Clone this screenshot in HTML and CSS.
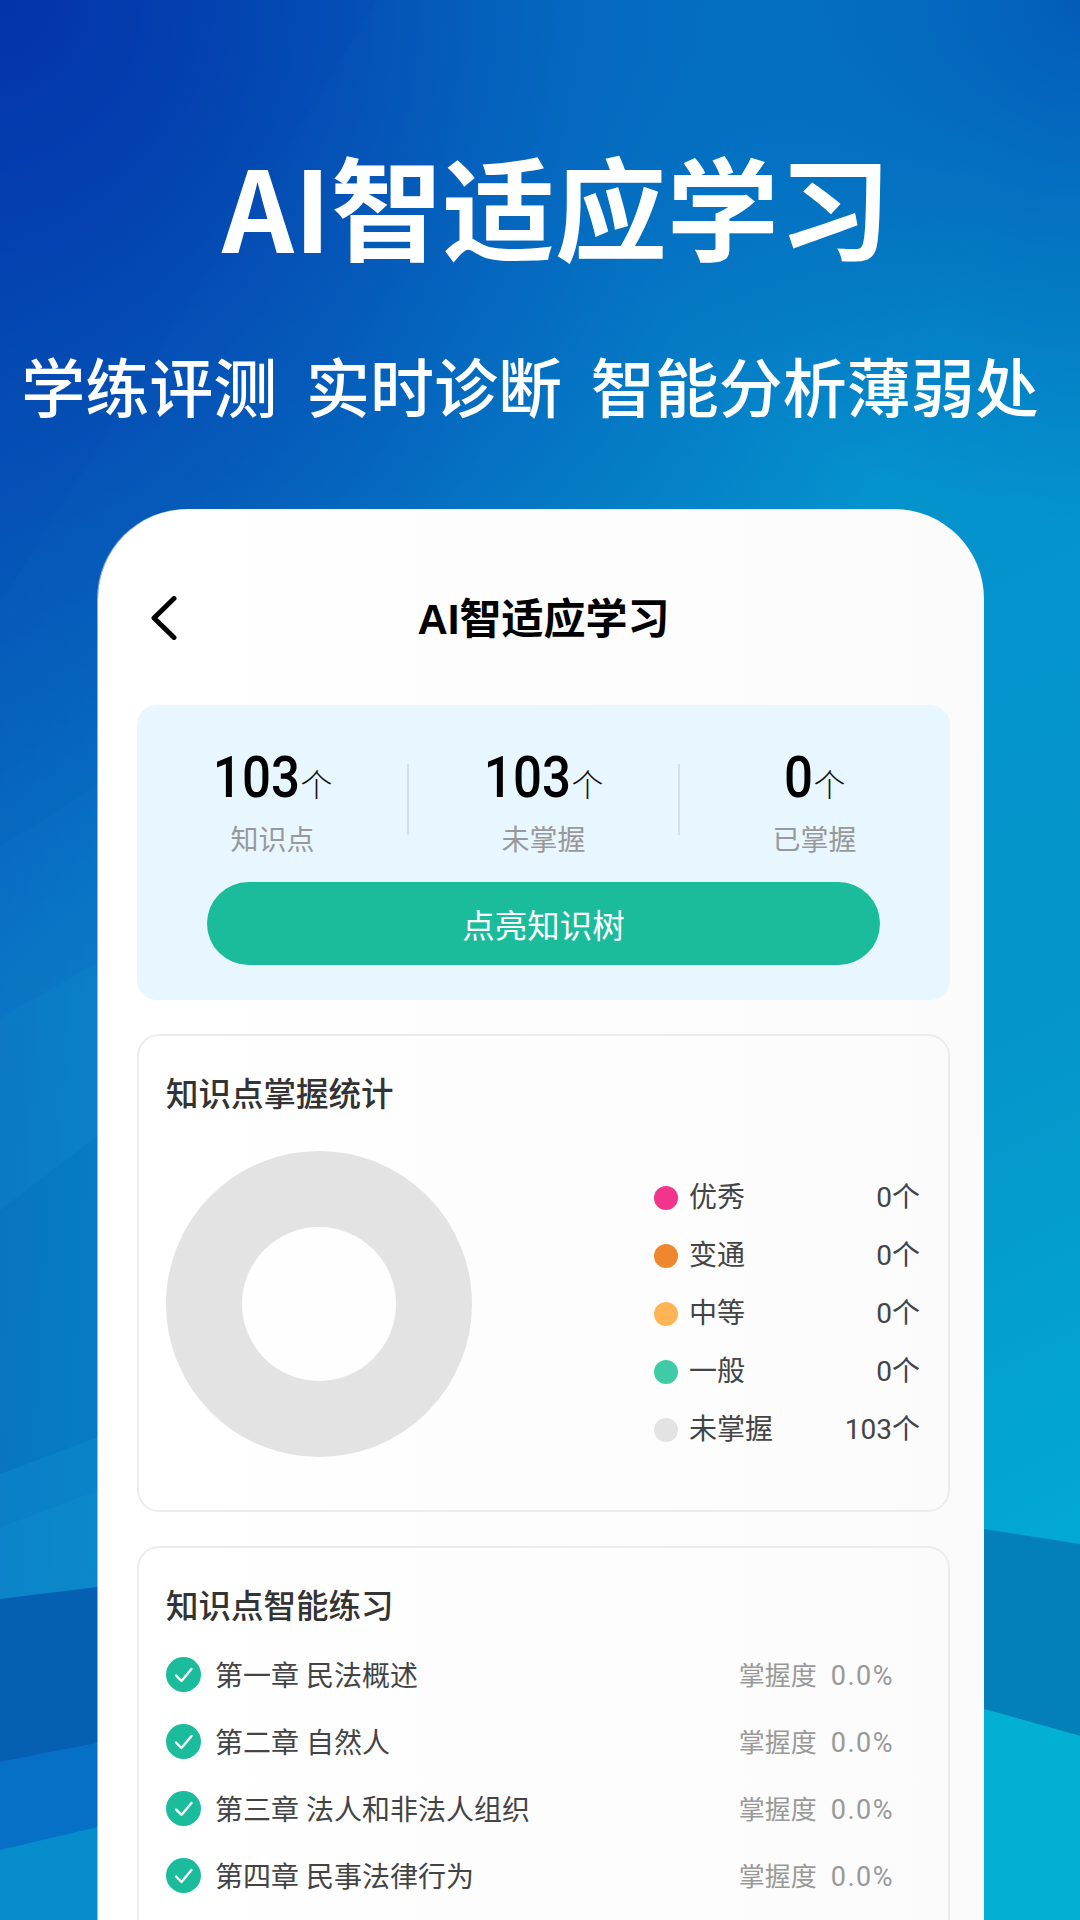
FILE: index.html
```html
<!DOCTYPE html>
<html lang="zh-CN">
<head>
<meta charset="utf-8">
<title>AI智适应学习</title>
<link rel="stylesheet" href="styles.css">
</head>
<body>
<div class="poster">
  <svg class="bg" viewBox="0 0 1080 1920" preserveAspectRatio="none" aria-hidden="true">
    <defs>
      <linearGradient id="base" gradientUnits="userSpaceOnUse" x1="300" y1="400" x2="1080" y2="1920">
        <stop offset="0" stop-color="#058fce"/>
        <stop offset=".55" stop-color="#0497cb"/>
        <stop offset="1" stop-color="#00b8d8"/>
      </linearGradient>
      <radialGradient id="tl" gradientUnits="userSpaceOnUse" cx="0" cy="0" r="1000">
        <stop offset="0" stop-color="#0433aa"/>
        <stop offset="1" stop-color="#0433aa" stop-opacity="0"/>
      </radialGradient>
      <radialGradient id="tr" gradientUnits="userSpaceOnUse" cx="1080" cy="0" r="520">
        <stop offset="0" stop-color="#035cb8"/>
        <stop offset="1" stop-color="#035cb8" stop-opacity="0"/>
      </radialGradient>
      <linearGradient id="left" gradientUnits="userSpaceOnUse" x1="0" y1="0" x2="480" y2="0">
        <stop offset="0" stop-color="#0a55b8" stop-opacity=".5"/>
        <stop offset="1" stop-color="#0a55b8" stop-opacity="0"/>
      </linearGradient>
    </defs>
    <rect width="1080" height="1920" fill="url(#base)"/>
    <rect width="1080" height="1920" fill="url(#left)"/>
    <rect width="1080" height="1920" fill="url(#tl)"/>
    <rect width="1080" height="1920" fill="url(#tr)"/>
    <polygon points="0,0 378,0 0,603" fill="#0433aa" opacity=".05"/>
    <polygon points="0,847 98,785 98,962 0,1018" fill="#2a8fe0" opacity=".08"/>
    <polygon points="0,1018 98,962 98,1136 0,1210" fill="#2a9fe8" opacity=".13"/>
    <polygon points="0,1474 98,1437 98,1490 0,1527" fill="#1aa0dc" opacity=".22"/>
    <polygon points="0,1527 98,1490 98,1587 0,1599" fill="#1aa8dc" opacity=".28"/>
    <polygon points="0,1599 98,1587 98,1743 0,1762" fill="#0560b4"/>
    <polygon points="0,1762 98,1743 98,1827 0,1850" fill="#0570c6"/>
    <polygon points="0,1850 98,1827 98,1920 0,1920" fill="#078dcb"/>
    <polygon points="984,1529 1080,1544 1080,1736 984,1709" fill="#0480b8"/>
    <polygon points="984,1709 1080,1736 1080,1920 984,1920" fill="#01b0d3"/>
  </svg>

  <h1 class="headline">AI智适应学习</h1>
  <p class="subline">学练评测&nbsp; 实时诊断&nbsp; 智能分析薄弱处</p>

  <main class="panel">
    <header class="nav">
      <svg class="back" viewBox="0 0 27 44" aria-hidden="true"><path d="M24 2.5 4 22l20 19.5" fill="none" stroke="#000" stroke-width="5" stroke-linecap="round" stroke-linejoin="round"/></svg>
      <span class="nav-title">AI智适应学习</span>
    </header>

    <section class="summary">
      <div class="stats">
        <div class="stat">
          <div class="stat-num"><span class="digits d3">103</span><span class="unit">个</span></div>
          <div class="stat-label">知识点</div>
        </div>
        <div class="stat">
          <div class="stat-num"><span class="digits d3">103</span><span class="unit">个</span></div>
          <div class="stat-label">未掌握</div>
        </div>
        <div class="stat">
          <div class="stat-num"><span class="digits d1">0</span><span class="unit">个</span></div>
          <div class="stat-label">已掌握</div>
        </div>
      </div>
      <div class="cta">点亮知识树</div>
    </section>

    <section class="card card-chart">
      <h2 class="card-title">知识点掌握统计</h2>
      <div class="chart-row">
        <div class="donut"></div>
        <ul class="legend">
          <li><i class="dot dot-a"></i><span class="legend-name">优秀</span><span>0个</span></li>
          <li><i class="dot dot-b"></i><span class="legend-name">变通</span><span>0个</span></li>
          <li><i class="dot dot-c"></i><span class="legend-name">中等</span><span>0个</span></li>
          <li><i class="dot dot-d"></i><span class="legend-name">一般</span><span>0个</span></li>
          <li><i class="dot dot-e"></i><span class="legend-name">未掌握</span><span>103个</span></li>
        </ul>
      </div>
    </section>

    <section class="card card-list">
      <h2 class="card-title">知识点智能练习</h2>
      <ul class="chapters">
        <li><svg class="check" viewBox="0 0 35 35" aria-hidden="true"><circle cx="17.5" cy="17.5" r="17.5" fill="#1abc9c"/><path d="M10 18.5l5.5 5.5L25.5 12" fill="none" stroke="#fff" stroke-width="2.4" stroke-linecap="round" stroke-linejoin="round"/></svg><span class="chapter-name">第一章 民法概述</span><span class="mastery">掌握度</span><span class="pct">0.0%</span></li>
        <li><svg class="check" viewBox="0 0 35 35" aria-hidden="true"><circle cx="17.5" cy="17.5" r="17.5" fill="#1abc9c"/><path d="M10 18.5l5.5 5.5L25.5 12" fill="none" stroke="#fff" stroke-width="2.4" stroke-linecap="round" stroke-linejoin="round"/></svg><span class="chapter-name">第二章 自然人</span><span class="mastery">掌握度</span><span class="pct">0.0%</span></li>
        <li><svg class="check" viewBox="0 0 35 35" aria-hidden="true"><circle cx="17.5" cy="17.5" r="17.5" fill="#1abc9c"/><path d="M10 18.5l5.5 5.5L25.5 12" fill="none" stroke="#fff" stroke-width="2.4" stroke-linecap="round" stroke-linejoin="round"/></svg><span class="chapter-name">第三章 法人和非法人组织</span><span class="mastery">掌握度</span><span class="pct">0.0%</span></li>
        <li><svg class="check" viewBox="0 0 35 35" aria-hidden="true"><circle cx="17.5" cy="17.5" r="17.5" fill="#1abc9c"/><path d="M10 18.5l5.5 5.5L25.5 12" fill="none" stroke="#fff" stroke-width="2.4" stroke-linecap="round" stroke-linejoin="round"/></svg><span class="chapter-name">第四章 民事法律行为</span><span class="mastery">掌握度</span><span class="pct">0.0%</span></li>
      </ul>
    </section>
  </main>
</div>
</body>
</html>
```
FILE: styles.css
```css
* { box-sizing: border-box; margin: 0; padding: 0; }
html, body { width: 1080px; height: 1920px; overflow: hidden; }
body { font-family: "Noto Sans CJK SC", "Noto Sans", sans-serif; color: #333; }
ul { list-style: none; }

.poster { position: relative; width: 1080px; height: 1920px; overflow: hidden; padding-top: 129px; display: flex; flex-direction: column; align-items: center; }
.bg { position: absolute; left: 0; top: 0; width: 1080px; height: 1920px; }

.headline { position: relative; margin-left: 33px; font-size: 112px; line-height: 150px; font-weight: 700; color: #fff; white-space: nowrap; font-family: "Noto Sans CJK SC", sans-serif; }
.subline { position: relative; margin-top: 63px; margin-right: 20px; font-size: 64px; line-height: 84px; font-weight: 500; color: #fff; white-space: nowrap; }

.panel { position: relative; margin-top: 83px; margin-left: 2px; width: 886px; flex: 1; background: linear-gradient(to right, #fff, #fbfbfb); box-shadow: -1px 0 0 rgba(255,255,255,.5); border-radius: 90px 90px 0 0; padding: 68px 34px 0 39px; display: flex; flex-direction: column; }

.nav { position: relative; display: flex; justify-content: center; align-items: center; height: 60px; margin-top: 8px; margin-bottom: 60px; }
.back { position: absolute; left: 13px; top: 11px; width: 27px; height: 44px; }
.nav-title { font-size: 42px; font-weight: 700; color: #000; font-family: "Liberation Sans", "Noto Sans CJK SC", sans-serif; }

.summary { background: #e8f7ff; border-radius: 20px; height: 295px; padding-top: 39px; display: flex; flex-direction: column; align-items: center; flex: none; }
.stats { display: grid; grid-template-columns: repeat(3, 1fr); width: 100%; }
.stat { display: flex; flex-direction: column; align-items: center; position: relative; }
.stat + .stat::before { content: ""; position: absolute; left: -1px; top: 20px; width: 2px; height: 71px; background: #d5e0e6; }
.stat-num { font-family: Roboto, "Liberation Sans", sans-serif; font-size: 58px; line-height: 66px; color: #000; white-space: nowrap; }
.digits { display: inline-block; font-weight: 500; transform: scaleX(.88); transform-origin: right center; }
.d3 { margin-left: -12px; }
.d1 { margin-left: -4px; }
.unit { font-family: "Noto Sans CJK SC", sans-serif; font-size: 32px; font-weight: 300; margin-left: 1px; color: #111; }
.stat-label { font-size: 28px; line-height: 40px; color: #999; margin-top: 2px; }
.cta { margin-top: 24px; width: 673px; height: 83px; border-radius: 42px; background: #1abc9c; color: #fff; font-size: 32.5px; display: flex; align-items: center; justify-content: center; }

.card { border: 2px solid #ececec; border-radius: 22px; flex: none; }
.card-title { font-size: 32.5px; line-height: 46px; font-weight: 500; color: #333; }
.card-chart { margin-top: 34px; height: 478px; padding: 33px 28px 0 27px; }
.chart-row { display: flex; align-items: center; justify-content: space-between; margin-top: 36px; }
.donut { width: 306px; height: 306px; border-radius: 50%; border: 76px solid #e3e3e3; flex: none; }
.legend { width: 266px; margin-top: 20px; display: flex; flex-direction: column; gap: 18px; font-size: 28px; line-height: 40px; color: #444; font-family: Roboto, "Noto Sans CJK SC", sans-serif; }
.legend li { display: flex; align-items: center; }
.legend-name { flex: 1; margin-left: 11px; }
.dot { width: 24px; height: 24px; border-radius: 50%; flex: none; }
.dot-a { background: #f2348c; }
.dot-b { background: #ee872d; }
.dot-c { background: #ffb554; }
.dot-d { background: #3fcba5; }
.dot-e { background: #e3e3e3; }

.card-list { margin-top: 34px; flex: 1; border-bottom: 0; border-radius: 22px 22px 0 0; padding: 33px 27px 0; }
.chapters { margin-top: 27px; display: flex; flex-direction: column; gap: 27px; }
.chapters li { display: flex; align-items: center; height: 40px; font-size: 28px; font-family: Roboto, "Noto Sans CJK SC", sans-serif; }
.check { width: 35px; height: 35px; flex: none; margin-right: 14px; }
.chapter-name { flex: 1; color: #444; }
.mastery { color: #999; font-size: 26px; margin-bottom: 2px; }
.pct { color: #999; font-size: 27px; margin-top: 3px; margin-left: 14px; margin-right: 27px; letter-spacing: 1.5px; }
```
